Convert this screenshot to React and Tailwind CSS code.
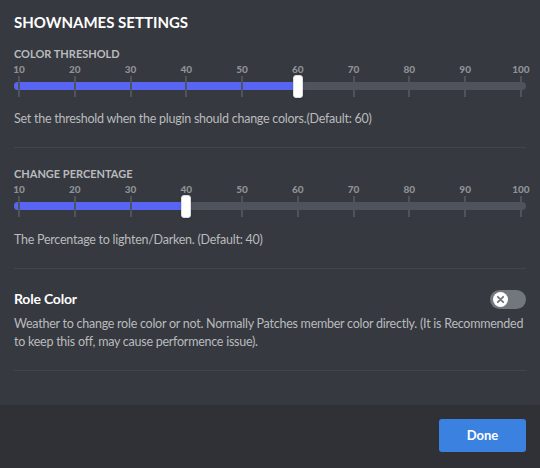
import React from "react";

const marks = [10, 20, 30, 40, 50, 60, 70, 80, 90, 100];

const Slider = ({ value }) => {
  const pct = ((value - 10) / 90) * 100;
  return (
    <div className="px-[5px]">
      <div className="flex justify-between h-[14px] pt-[1px]">
        {marks.map((m) => (
          <div key={m} className="w-0 flex justify-center">
            <span className="text-[10px] leading-[12px] font-black text-[#8e9297]">{m}</span>
          </div>
        ))}
      </div>
      <div className="relative h-[22px]">
        <div className="absolute left-[-5px] right-[-5px] top-[6px] h-[8px] rounded-full bg-[#4f545c]" />
        <div
          className="absolute left-[-5px] top-[6px] h-[8px] rounded-l-full bg-[#5865f2]"
          style={{ width: `calc(${pct}% + 5px)` }}
        />
        <div className="relative flex justify-between h-[21px] mx-[-1px]">
          {marks.map((m) => (
            <div key={m} className="w-[2px] h-full bg-[#4f545c]" />
          ))}
        </div>
        <div
          className="absolute top-[-1px] w-[10px] h-[23px] -translate-x-1/2 rounded-[3px] bg-white border border-[#dcddde] shadow"
          style={{ left: `${pct}%` }}
        />
      </div>
    </div>
  );
};

const Label = ({ children }) => (
  <div className="text-[11px] leading-[16px] font-bold uppercase text-[#b9bbbe]">{children}</div>
);

const Desc = ({ children, className = "" }) => (
  <p className={`text-[12.5px] leading-[18px] tracking-[-0.25px] text-[#b9bbbe] ${className}`}>{children}</p>
);

export default function App() {
  return (
    <div
      className="w-[540px] h-[468px] bg-[#36393f] flex flex-col"
      style={{ fontFamily: 'Lato, "Noto Sans", sans-serif' }}
    >
      <div className="flex-1 px-[14px] pt-[12px]">
        <h2 className="text-[15px] leading-[20px] font-bold text-white uppercase">ShowNames Settings</h2>

        <div className="mt-[14px]">
          <Label>Color Threshold</Label>
          <Slider value={60} />
          <Desc className="mt-[12px]">Set the threshold when the plugin should change colors.(Default: 60)</Desc>
        </div>
        <div className="mt-[19px] h-px bg-[#42454a]" />

        <div className="mt-[18px]">
          <Label>Change Percentage</Label>
          <Slider value={40} />
          <Desc className="mt-[13px]">The Percentage to lighten/Darken. (Default: 40)</Desc>
        </div>
        <div className="mt-[19px] h-px bg-[#42454a]" />

        <div className="mt-[20px]">
          <div className="flex items-center justify-between">
            <div className="text-[14px] leading-[20px] tracking-[-0.2px] font-bold text-white">Role Color</div>
            <div className="w-[36px] h-[19px] rounded-full bg-[#72767d] flex items-center pl-[3px]">
              <div className="w-[15px] h-[15px] rounded-full bg-white flex items-center justify-center">
                <svg width="9" height="9" viewBox="0 0 10 10">
                  <path d="M2 2L8 8M8 2L2 8" stroke="#72767d" strokeWidth="2" strokeLinecap="round" />
                </svg>
              </div>
            </div>
          </div>
          <Desc className="mt-[6px]">
            Weather to change role color or not. Normally Patches member color directly. (It is Recommended to keep
            this off, may cause performence issue).
          </Desc>
        </div>
        <div className="mt-[19px] h-px bg-[#42454a]" />
      </div>

      <div className="h-[63px] bg-[#2f3136] flex justify-end items-start pt-[14px] px-[14px]">
        <button className="w-[87px] h-[33px] rounded-[3px] bg-[#3b82e0] text-white text-[13px] font-bold">
          Done
        </button>
      </div>
    </div>
  );
}
